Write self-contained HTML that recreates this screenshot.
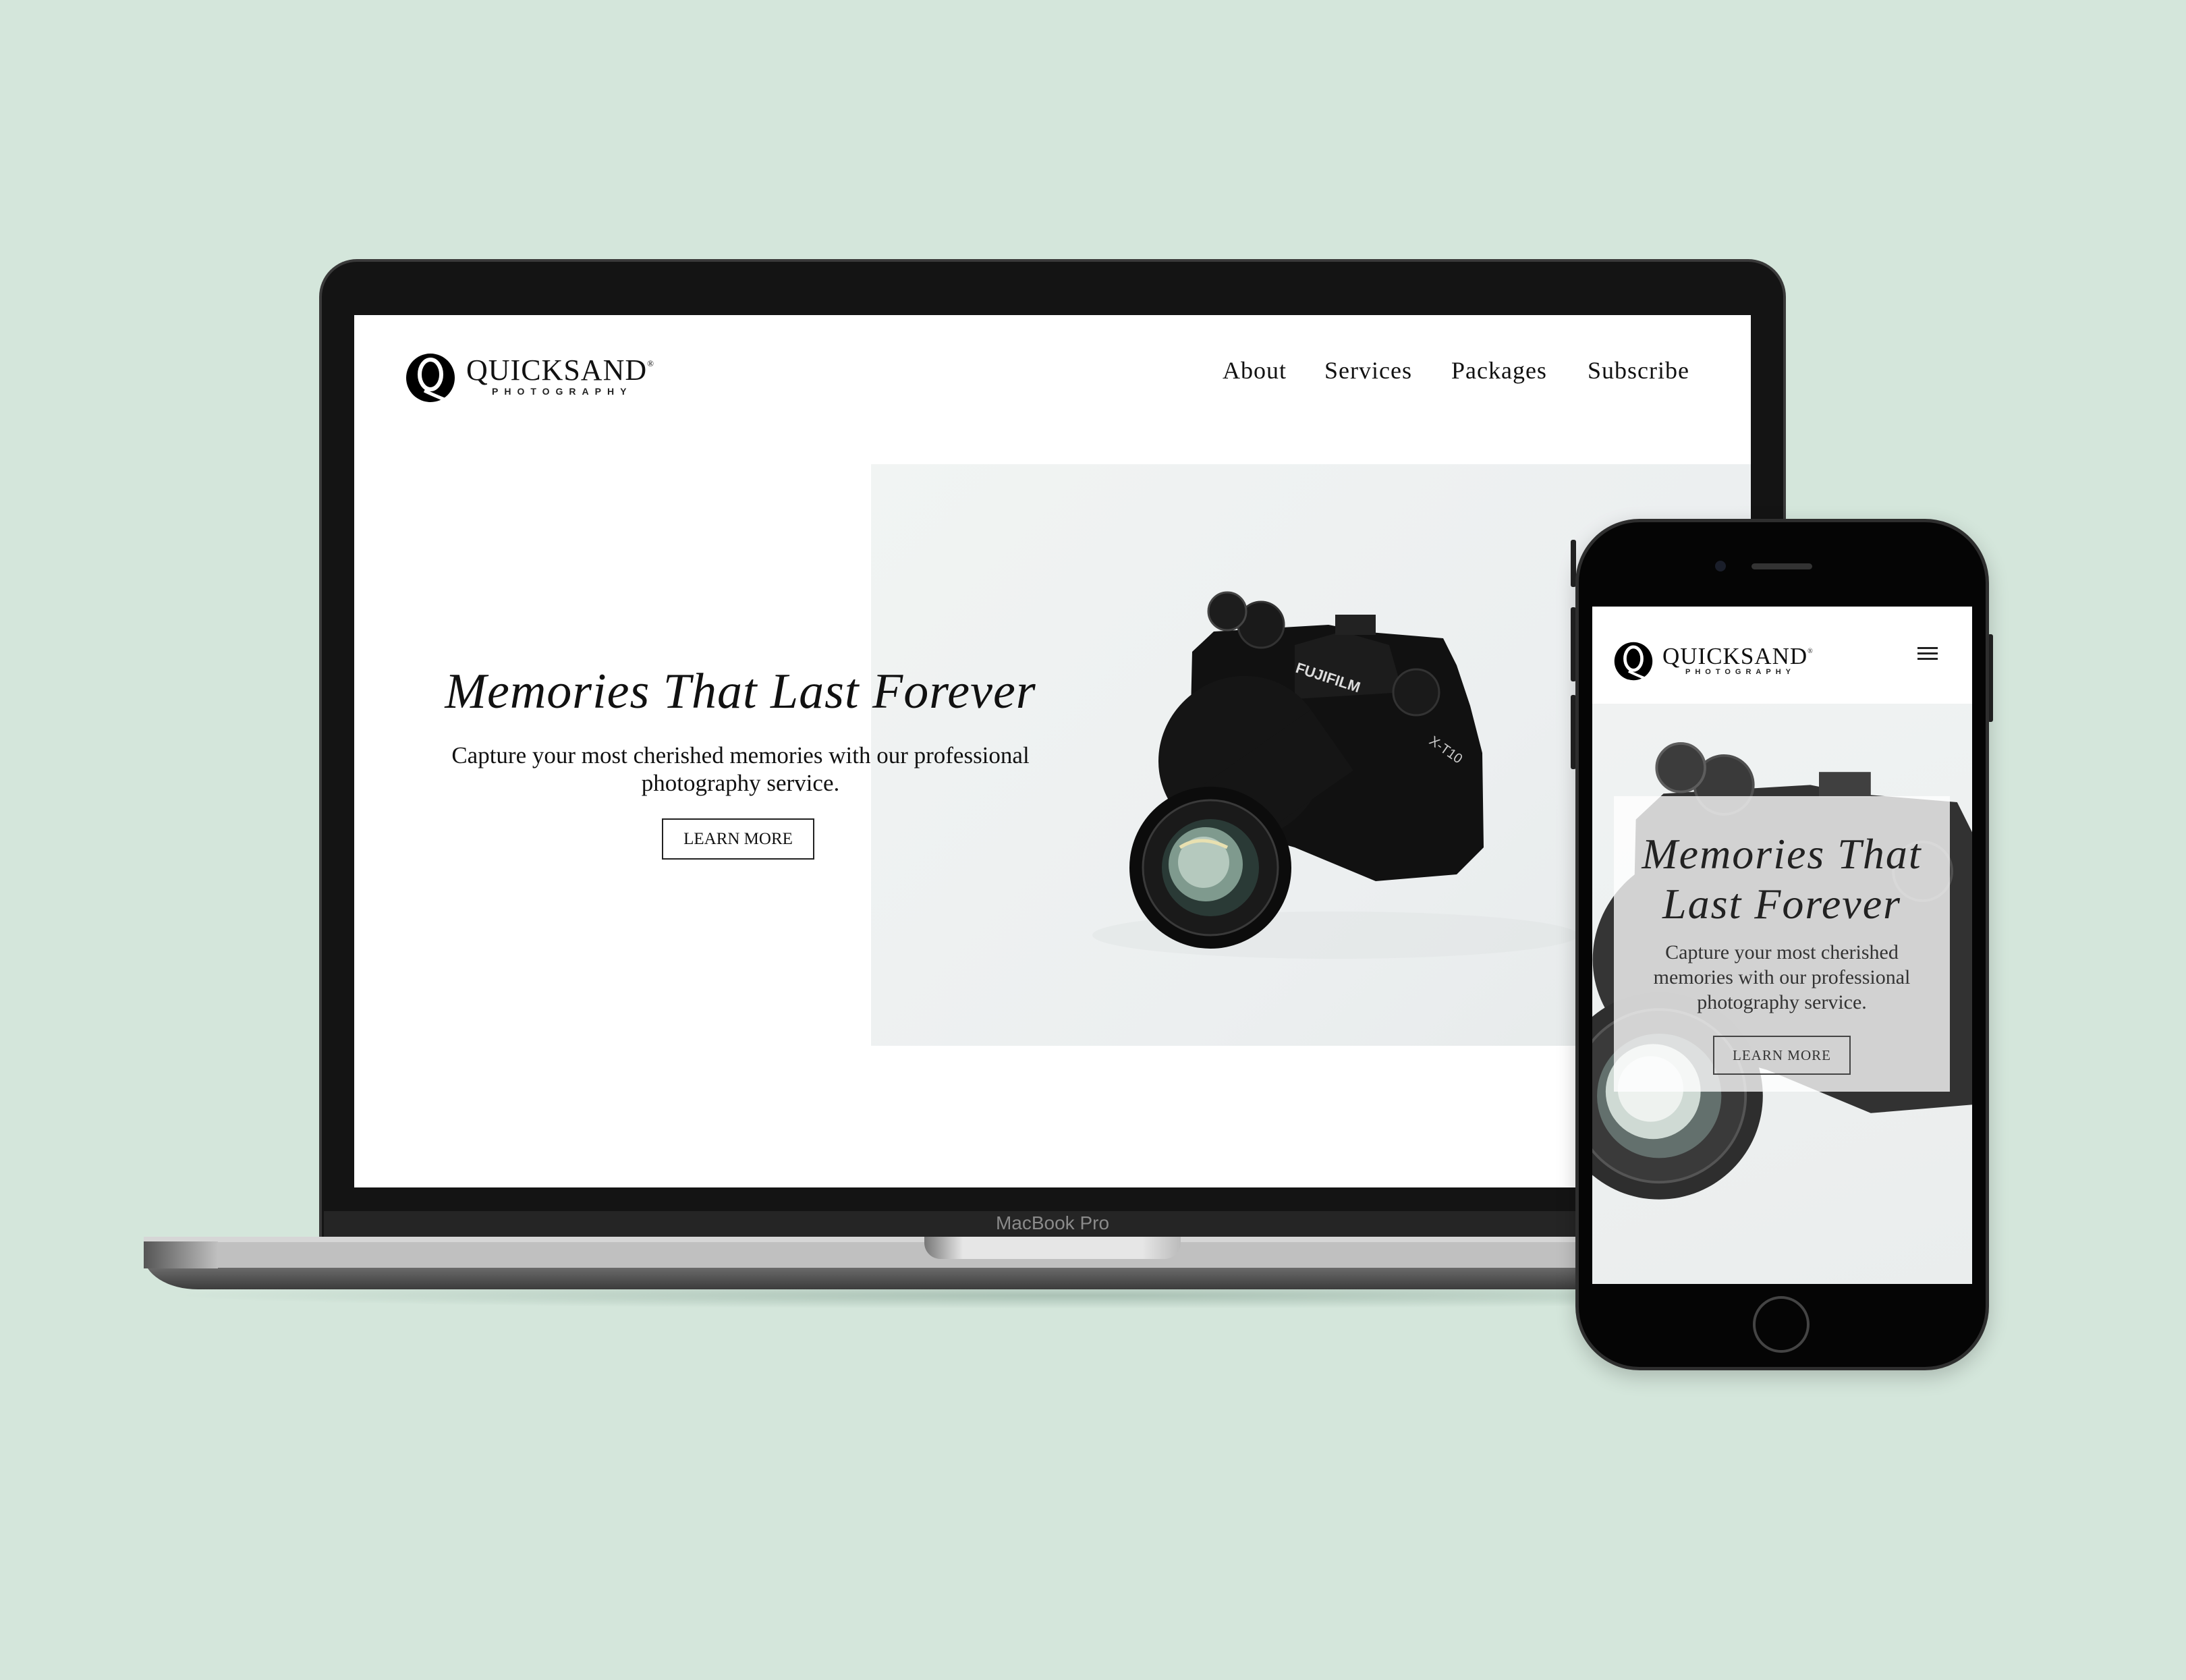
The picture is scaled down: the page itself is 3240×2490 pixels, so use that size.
<!DOCTYPE html>
<html><head><meta charset="utf-8">
<style>
*{margin:0;padding:0;box-sizing:border-box}
body{width:3240px;height:2490px;background:#d4e6db;position:relative;overflow:hidden;font-family:"Liberation Serif",serif}
.abs{position:absolute}
.nav a{position:absolute;top:62px;font-size:36px;color:#111;text-decoration:none;letter-spacing:1px;line-height:40px}
.reg{position:relative;top:-20px;font-size:13px}
</style></head><body>

<div class="abs" style="left:240px;top:1900px;width:2700px;height:40px;background:radial-gradient(ellipse at center,rgba(120,150,135,.45),rgba(120,150,135,0) 70%)"></div>

<div class="abs" style="left:473px;top:384px;width:2174px;height:1460px;background:#141414;border-radius:56px 56px 0 0;border:4px solid #3a3a3a;border-bottom:none"></div>
<div class="abs" style="left:480px;top:1795px;width:2160px;height:40px;background:#252525"></div>
<div class="abs" style="left:1470px;top:1795px;width:180px;height:36px;color:#8a8a8a;font-family:'Liberation Sans',sans-serif;font-size:28px;text-align:center;line-height:36px">MacBook Pro</div>

<div class="abs" style="left:525px;top:467px;width:2070px;height:1293px;background:#fff;overflow:hidden">
  <div class="abs" style="left:766px;top:221px;width:1304px;height:862px;background:linear-gradient(135deg,#f1f4f3,#eceff0 60%,#e6eaea)"></div>
  <svg class="abs" style="left:766px;top:221px" width="1304" height="862" viewBox="0 0 1304 862">
    <g transform="translate(-12,8)">
      <ellipse cx="700" cy="690" rx="360" ry="35" fill="#dfe3e3" opacity=".5"/>
      <path d="M488 270 L520 240 L690 230 L740 240 L860 250 L880 290 L900 350 L918 420 L920 560 L880 600 L760 610 L640 560 L500 520 L485 400 Z" fill="#111"/>
      <path d="M640 260 L710 240 L780 260 L800 330 L640 340 Z" fill="#1c1c1c"/>
      <rect x="700" y="215" width="60" height="30" fill="#222"/>
      <circle cx="590" cy="230" r="34" fill="#1a1a1a" stroke="#333" stroke-width="3"/>
      <circle cx="540" cy="210" r="28" fill="#1d1d1d" stroke="#444" stroke-width="3"/>
      <circle cx="820" cy="330" r="34" fill="#1a1a1a" stroke="#333" stroke-width="3"/>
      <text x="640" y="300" fill="#ddd" font-family="Liberation Sans,sans-serif" font-size="22" font-weight="bold" transform="rotate(18 640 300)">FUJIFILM</text>
      <text x="838" y="405" fill="#ccc" font-family="Liberation Sans,sans-serif" font-size="20" transform="rotate(35 838 405)">X-T10</text>
      <g transform="rotate(-35 545 500)">
        <ellipse cx="600" cy="450" rx="125" ry="120" fill="#151515"/>
        <rect x="475" y="450" width="250" height="110" fill="#151515"/>
      </g>
      <circle cx="515" cy="590" r="120" fill="#0c0c0c"/>
      <circle cx="515" cy="590" r="100" fill="#1a1a1a" stroke="#3a3a3a" stroke-width="3"/>
      <circle cx="515" cy="590" r="72" fill="#2a3a36"/>
      <circle cx="508" cy="585" r="55" fill="#7f9a8e"/>
      <circle cx="505" cy="582" r="38" fill="#b5c9be"/>
      <path d="M470 560 Q500 540 540 560" stroke="#e8e0b0" stroke-width="5" fill="none"/>
    </g>
  </svg>
  <svg class="abs" style="left:76px;top:56px" width="74" height="74" viewBox="0 0 74 74">
    <circle cx="37" cy="37" r="36" fill="#000"/>
    <ellipse cx="37" cy="32" rx="16" ry="22" fill="none" stroke="#fff" stroke-width="6"/>
    <path d="M28 56 Q40 62 60 70" stroke="#fff" stroke-width="5" fill="none"/>
  </svg>
  <div class="abs" style="left:166px;top:60px;font-size:44px;letter-spacing:1px;color:#111;line-height:44px;white-space:nowrap">QUICKSAND<span class="reg">®</span></div>
  <div class="abs" style="left:204px;top:105px;font-family:'Liberation Sans',sans-serif;font-weight:bold;font-size:14px;letter-spacing:9px;color:#222;line-height:16px">PHOTOGRAPHY</div>
  <div class="nav">
    <a style="left:1287px">About</a><a style="left:1438px">Services</a><a style="left:1626px">Packages</a><a style="left:1828px">Subscribe</a>
  </div>
  <div class="abs" style="left:0;width:1145px;top:516px;text-align:center;font-style:italic;font-size:74px;letter-spacing:1px;color:#111">Memories That Last Forever</div>
  <div class="abs" style="left:0;width:1145px;top:632px;text-align:center;font-size:35px;line-height:41px;color:#111">Capture your most cherished memories with our professional<br>photography service.</div>
  <div class="abs" style="left:456px;top:746px;width:226px;height:61px;border:2px solid #222;text-align:center;line-height:57px;font-size:25px;color:#111">LEARN MORE</div>
</div>

<div class="abs" style="left:213px;top:1833px;width:2694px;height:78px;border-radius:0 0 0 80px / 0 0 0 50px;background:linear-gradient(#d6d6d6 0 8px,#c0c0c0 8px 46px,#6a6a6a 46px,#3c3c3c 78px)"></div>
<div class="abs" style="left:213px;top:1840px;width:110px;height:40px;background:linear-gradient(90deg,#555,#c0c0c0)"></div>
<div class="abs" style="left:1370px;top:1833px;width:380px;height:33px;background:linear-gradient(90deg,#777,#e6e6e6 15%,#e6e6e6 85%,#bbb);border-radius:0 0 24px 24px"></div>

<div class="abs" style="left:2328px;top:800px;width:8px;height:70px;background:#222;border-radius:3px"></div>
<div class="abs" style="left:2328px;top:900px;width:8px;height:110px;background:#222;border-radius:3px"></div>
<div class="abs" style="left:2328px;top:1030px;width:8px;height:110px;background:#222;border-radius:3px"></div>
<div class="abs" style="left:2946px;top:940px;width:8px;height:130px;background:#222;border-radius:3px"></div>
<div class="abs" style="left:2335px;top:769px;width:613px;height:1262px;background:#050505;border-radius:95px;border:5px solid #2e2e2e;box-shadow:0 10px 30px rgba(0,0,0,.2)"></div>
<div class="abs" style="left:2542px;top:831px;width:16px;height:16px;border-radius:50%;background:#1a1e2a"></div>
<div class="abs" style="left:2596px;top:835px;width:90px;height:9px;border-radius:5px;background:#333"></div>
<div class="abs" style="left:2598px;top:1921px;width:84px;height:84px;border-radius:50%;border:4px solid #444"></div>

<div class="abs" style="left:2360px;top:899px;width:563px;height:1004px;background:#fff;overflow:hidden">
  <div class="abs" style="left:0;top:144px;width:563px;height:860px;background:linear-gradient(160deg,#f0f3f3,#e9eded)"></div>
  <svg class="abs" style="left:0;top:0" width="563" height="1004" viewBox="0 0 563 1004">
    <g transform="translate(-560,-30) scale(1.28)">
      <path d="M488 270 L520 240 L690 230 L740 240 L860 250 L880 290 L900 350 L918 420 L920 560 L880 600 L760 610 L640 560 L500 520 L485 400 Z" fill="#111"/>
      <rect x="700" y="215" width="60" height="30" fill="#222"/>
      <circle cx="590" cy="230" r="34" fill="#1a1a1a" stroke="#333" stroke-width="3"/>
      <circle cx="540" cy="210" r="28" fill="#1d1d1d" stroke="#444" stroke-width="3"/>
      <circle cx="820" cy="330" r="34" fill="#1a1a1a" stroke="#333" stroke-width="3"/>
      <g transform="rotate(-35 545 500)">
        <ellipse cx="600" cy="450" rx="125" ry="120" fill="#151515"/>
        <rect x="475" y="450" width="250" height="110" fill="#151515"/>
      </g>
      <circle cx="515" cy="590" r="120" fill="#0c0c0c"/>
      <circle cx="515" cy="590" r="100" fill="#1a1a1a" stroke="#3a3a3a" stroke-width="3"/>
      <circle cx="515" cy="590" r="72" fill="#4a5a56"/>
      <circle cx="508" cy="585" r="55" fill="#c9d6cf"/>
      <circle cx="505" cy="582" r="38" fill="#eef2ef"/>
    </g>
  </svg>
  <div class="abs" style="left:0;top:144px;width:563px;height:860px;background:rgba(240,244,243,.15)"></div>
  <div class="abs" style="left:0;top:0;width:563px;height:144px;background:#fff"></div>
  <svg class="abs" style="left:32px;top:52px" width="58" height="58" viewBox="0 0 74 74">
    <circle cx="37" cy="37" r="36" fill="#000"/>
    <ellipse cx="37" cy="32" rx="16" ry="22" fill="none" stroke="#fff" stroke-width="6"/>
    <path d="M28 56 Q40 62 60 70" stroke="#fff" stroke-width="5" fill="none"/>
  </svg>
  <div class="abs" style="left:104px;top:56px;font-size:35px;letter-spacing:1px;color:#111;line-height:36px;white-space:nowrap">QUICKSAND<span style="position:relative;top:-16px;font-size:10px">®</span></div>
  <div class="abs" style="left:138px;top:91px;font-family:'Liberation Sans',sans-serif;font-weight:bold;font-size:11px;letter-spacing:7px;color:#222;line-height:12px">PHOTOGRAPHY</div>
  <div class="abs" style="left:482px;top:60px;width:30px;height:3px;background:#222;box-shadow:0 8px 0 #222,0 16px 0 #222"></div>
  <div class="abs" style="left:32px;top:281px;width:498px;height:438px;background:rgba(255,255,255,.78)"></div>
  <div class="abs" style="left:32px;top:330px;width:498px;text-align:center;font-style:italic;font-size:64px;line-height:74px;letter-spacing:2px;color:#222">Memories That<br>Last Forever</div>
  <div class="abs" style="left:32px;top:494px;width:498px;text-align:center;font-size:30px;line-height:37px;color:#333">Capture your most cherished<br>memories with our professional<br>photography service.</div>
  <div class="abs" style="left:179px;top:636px;width:204px;height:58px;border:2px solid #444;text-align:center;line-height:54px;font-size:21px;letter-spacing:1px;color:#333">LEARN MORE</div>
</div>
</body></html>
